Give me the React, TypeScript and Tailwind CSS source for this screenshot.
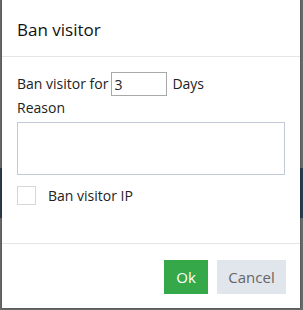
const App = () => {
  return (
    <div className="relative w-[303px] h-[310px] bg-[#6a6a6a] overflow-hidden font-['Open_Sans',sans-serif]">
      {/* page behind the overlay */}
      <div className="absolute left-0 right-0 top-[168px] h-[50px] bg-[#2e3b4b]"></div>

      {/* Modal */}
      <div className="absolute left-[2px] top-0 w-[298px] h-[308px] bg-white flex flex-col shadow-[0_0_2px_rgba(0,0,0,0.4)]">
        <div className="h-[57px] shrink-0 flex items-center pl-[15px] border-b border-[#e5e5e5]">
          <h3 className="text-[17px] text-[#111] leading-none pt-[2px]">Ban visitor</h3>
        </div>

        <div className="flex-1 px-[15px] pt-[15px] text-[14px] text-[#222] leading-[20px]">
          <div className="flex items-center h-[24px]">
            <span>Ban visitor for</span>
            <input
              defaultValue="3"
              className="ml-[3px] w-[56px] h-[24px] border border-[#a9a9a9] px-[2px] text-[14px] outline-none"
            />
            <span className="ml-[5px]">Days</span>
          </div>
          <div className="mt-[2px] h-[20px]">Reason</div>
          <textarea className="mt-[4px] block w-[268px] h-[53px] border border-[#c2cad8] resize-none outline-none"></textarea>
          <label className="mt-[11px] flex items-center h-[19px]">
            <span className="w-[19px] h-[19px] border border-[#d6d6d6] bg-white"></span>
            <span className="ml-[12px]">Ban visitor IP</span>
          </label>
        </div>

        <div className="h-[65px] shrink-0 border-t border-[#e5e5e5] flex items-start justify-end gap-[9px] pr-[14px] pt-[16px]">
          <button className="w-[44px] h-[34px] bg-[#35a849] text-white text-[15px]">Ok</button>
          <button className="w-[69px] h-[34px] bg-[#e1e5ec] text-[#666] text-[15px]">Cancel</button>
        </div>
      </div>
    </div>
  );
};

export default App;
